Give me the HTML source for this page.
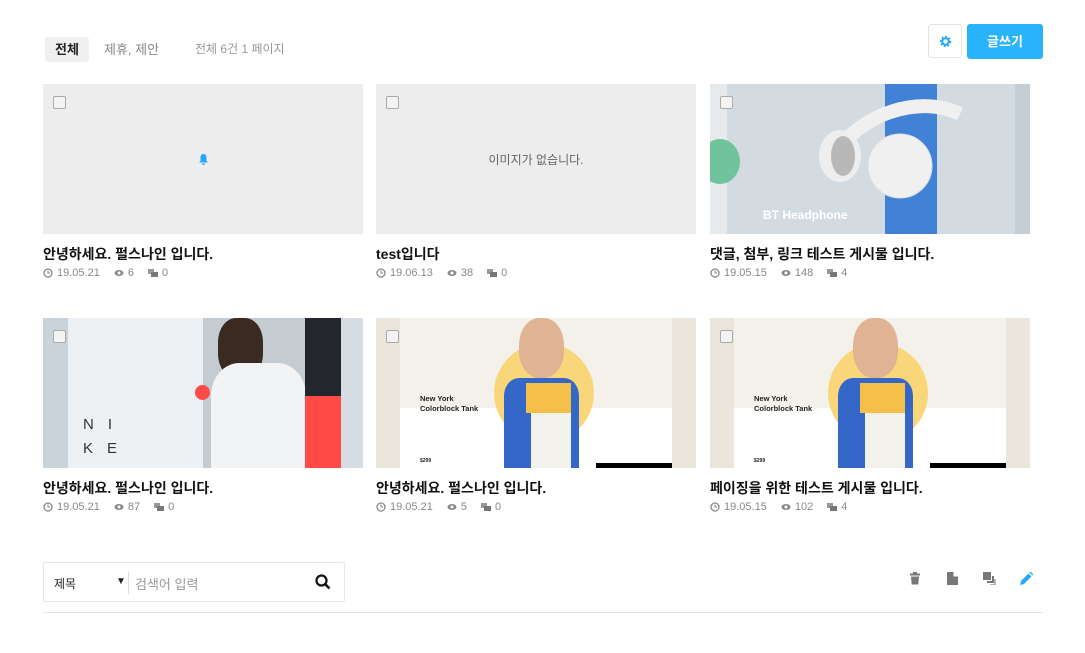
<!DOCTYPE html>
<html><head><meta charset="utf-8"><style>
*{margin:0;padding:0;box-sizing:border-box}
body{width:1085px;height:653px;background:#fff;font-family:"Liberation Sans","Noto Sans CJK KR",sans-serif;position:relative;overflow:hidden;color:#222}
.abs{position:absolute}
.tab{top:37px;height:25px;font-size:13px;line-height:25px}
.card{position:absolute;width:320px}
.img{height:150px;position:relative;overflow:hidden;background:#ededed}
.cb{position:absolute;left:10px;top:12px;width:13px;height:13px;border:1px solid #aaa;border-radius:2px;background:#f3f3f3}
.t{font-size:14px;font-weight:bold;margin-top:10px;height:20px;line-height:20px;color:#111}
.m{font-size:11px;color:#888;margin-top:3px;display:flex;align-items:center;gap:4px}
.m span{margin-right:10px}
.ic{display:inline-block;width:10px;height:10px}
</style></head><body>
<div class="abs tab" style="left:45px;width:44px;background:#f0f0f0;border-radius:3px;text-align:center;font-weight:bold">전체</div>
<div class="abs tab" style="left:104px;color:#888">제휴, 제안</div>
<div class="abs tab" style="left:195px;color:#999;font-size:12px">전체 6건 1 페이지</div>
<div class="abs" style="left:928px;top:24px;width:34px;height:34px;border:1px solid #e3e3e3;border-radius:3px;display:flex;align-items:center;justify-content:center">
<svg width="13" height="13" viewBox="0 0 16 16"><circle cx="8" cy="8" r="5.5" fill="none" stroke="#29a8f5" stroke-width="3" stroke-dasharray="2.2 2"/><circle cx="8" cy="8" r="4" fill="none" stroke="#29a8f5" stroke-width="2.5"/></svg></div>
<div class="abs" style="left:967px;top:24px;width:76px;height:35px;background:#29b3fb;border-radius:3px;color:#fff;font-weight:bold;font-size:13px;text-align:center;line-height:35px">글쓰기</div>

<!-- row 1 -->
<div class="card" style="left:43px;top:84px"><div class="img"><div class="cb"></div>
<svg class="abs" style="left:155px;top:69px" width="11" height="12" viewBox="0 0 11 12"><path d="M5.5 1C3 1 2.5 3 2.5 5v3L1 9.5h9L8.5 8V5C8.5 3 8 1 5.5 1z M4 10.5h3a1.5 1.5 0 0 1-3 0z" fill="#29a8f5"/></svg></div>
<div class="t">안녕하세요. 펄스나인 입니다.</div>
<div class="m"><svg class="ic" viewBox="0 0 10 10"><circle cx="5" cy="5" r="4" fill="none" stroke="#888" stroke-width="1.3"/><path d="M5 2.5V5h2" stroke="#888" fill="none"/></svg><span>19.05.21</span><svg class="ic" viewBox="0 0 10 10"><ellipse cx="5" cy="5" rx="4.5" ry="3" fill="#888"/><circle cx="5" cy="5" r="1.5" fill="#fff"/></svg><span>6</span><svg class="ic" viewBox="0 0 10 10"><rect x="0" y="1" width="6" height="5" fill="#999"/><rect x="3" y="4" width="7" height="5" fill="#777"/></svg><span>0</span></div></div>

<div class="card" style="left:376px;top:84px"><div class="img"><div class="cb"></div>
<div class="abs" style="left:0;right:0;top:67px;text-align:center;font-size:12px;color:#666">이미지가 없습니다.</div></div>
<div class="t">test입니다</div>
<div class="m"><svg class="ic" viewBox="0 0 10 10"><circle cx="5" cy="5" r="4" fill="none" stroke="#888" stroke-width="1.3"/><path d="M5 2.5V5h2" stroke="#888" fill="none"/></svg><span>19.06.13</span><svg class="ic" viewBox="0 0 10 10"><ellipse cx="5" cy="5" rx="4.5" ry="3" fill="#888"/><circle cx="5" cy="5" r="1.5" fill="#fff"/></svg><span>38</span><svg class="ic" viewBox="0 0 10 10"><rect x="0" y="1" width="6" height="5" fill="#999"/><rect x="3" y="4" width="7" height="5" fill="#777"/></svg><span>0</span></div></div>

<div class="card" style="left:710px;top:84px"><div class="img" style="background:#d3dbe0">
<div class="abs" style="left:0;top:0;width:17px;height:150px;background:#e6eaed"></div>
<div class="abs" style="left:305px;top:0;width:15px;height:150px;background:#c6ced5"></div>
<div class="abs" style="left:175px;top:0;width:52px;height:150px;background:#4282d6"></div>
<div class="abs" style="left:-10px;top:55px;width:40px;height:45px;border-radius:50%;background:#6fc39d"></div>
<svg class="abs" style="left:0;top:0" width="320" height="150"><path d="M125 70 C150 30 210 10 250 30" stroke="#f0f0f0" stroke-width="14" fill="none"/><ellipse cx="130" cy="72" rx="21" ry="26" fill="#eee"/><ellipse cx="133" cy="72" rx="12" ry="20" fill="#b8b8b8"/><circle cx="190" cy="82" r="32" fill="#f0f0f0"/><circle cx="190" cy="82" r="32" fill="none" stroke="#ddd"/></svg>
<div class="abs" style="left:53px;top:124px;color:#fff;font-weight:bold;font-size:12px">BT Headphone</div>
<div class="cb"></div></div>
<div class="t">댓글, 첨부, 링크 테스트 게시물 입니다.</div>
<div class="m"><svg class="ic" viewBox="0 0 10 10"><circle cx="5" cy="5" r="4" fill="none" stroke="#888" stroke-width="1.3"/><path d="M5 2.5V5h2" stroke="#888" fill="none"/></svg><span>19.05.15</span><svg class="ic" viewBox="0 0 10 10"><ellipse cx="5" cy="5" rx="4.5" ry="3" fill="#888"/><circle cx="5" cy="5" r="1.5" fill="#fff"/></svg><span>148</span><svg class="ic" viewBox="0 0 10 10"><rect x="0" y="1" width="6" height="5" fill="#999"/><rect x="3" y="4" width="7" height="5" fill="#777"/></svg><span>4</span></div></div>

<!-- row 2 -->
<div class="card" style="left:43px;top:318px"><div class="img" style="background:#dce4ea">
<div class="abs" style="left:0;top:0;width:25px;height:150px;background:#c9d3da"></div>
<div class="abs" style="left:25px;top:0;width:135px;height:150px;background:#eef1f4"></div>
<div class="abs" style="left:160px;top:0;width:102px;height:150px;background:#c4ccd2"></div>
<div class="abs" style="left:175px;top:0;width:45px;height:60px;border-radius:40%;background:#3b2a22"></div>
<div class="abs" style="left:168px;top:45px;width:95px;height:110px;border-radius:30% 30% 0 0;background:#f1f3f5"></div>
<div class="abs" style="left:262px;top:0;width:58px;height:150px;background:#d5dde3"></div>
<div class="abs" style="left:262px;top:0;width:36px;height:78px;background:#23262c"></div>
<div class="abs" style="left:262px;top:78px;width:36px;height:72px;background:#ff4a45"></div>
<div class="abs" style="left:152px;top:67px;width:15px;height:15px;border-radius:50%;background:#ff4a45"></div>
<div class="abs" style="left:40px;top:95px;font-size:15px;letter-spacing:14px;color:#333;line-height:24px">NI<br>KE</div>
<div class="cb"></div></div>
<div class="t">안녕하세요. 펄스나인 입니다.</div>
<div class="m"><svg class="ic" viewBox="0 0 10 10"><circle cx="5" cy="5" r="4" fill="none" stroke="#888" stroke-width="1.3"/><path d="M5 2.5V5h2" stroke="#888" fill="none"/></svg><span>19.05.21</span><svg class="ic" viewBox="0 0 10 10"><ellipse cx="5" cy="5" rx="4.5" ry="3" fill="#888"/><circle cx="5" cy="5" r="1.5" fill="#fff"/></svg><span>87</span><svg class="ic" viewBox="0 0 10 10"><rect x="0" y="1" width="6" height="5" fill="#999"/><rect x="3" y="4" width="7" height="5" fill="#777"/></svg><span>0</span></div></div>

<div class="card" style="left:376px;top:318px"><div class="img" style="background:#ebe6dc">
<div class="abs" style="left:24px;top:0;width:272px;height:90px;background:#f4f1ea"></div>
<div class="abs" style="left:24px;top:90px;width:272px;height:60px;background:#fff"></div>
<div class="abs" style="left:118px;top:25px;width:100px;height:100px;border-radius:50%;background:#f9d67a"></div>
<div class="abs" style="left:143px;top:0;width:45px;height:60px;border-radius:45%;background:#e0b394"></div>
<div class="abs" style="left:128px;top:60px;width:75px;height:90px;background:#3567c9;border-radius:20% 20% 0 0"></div>
<div class="abs" style="left:150px;top:65px;width:45px;height:30px;background:#f5c04a"></div>
<div class="abs" style="left:155px;top:95px;width:40px;height:55px;background:#f3f1ec"></div>
<div class="abs" style="left:44px;top:76px;font-size:7.5px;font-weight:bold;color:#222;line-height:10px">New York<br>Colorblock Tank</div>
<div class="abs" style="left:220px;top:145px;width:76px;height:5px;background:#000"></div>
<div class="abs" style="left:44px;top:140px;font-size:5px;font-weight:bold">$299</div>
<div class="cb"></div></div>
<div class="t">안녕하세요. 펄스나인 입니다.</div>
<div class="m"><svg class="ic" viewBox="0 0 10 10"><circle cx="5" cy="5" r="4" fill="none" stroke="#888" stroke-width="1.3"/><path d="M5 2.5V5h2" stroke="#888" fill="none"/></svg><span>19.05.21</span><svg class="ic" viewBox="0 0 10 10"><ellipse cx="5" cy="5" rx="4.5" ry="3" fill="#888"/><circle cx="5" cy="5" r="1.5" fill="#fff"/></svg><span>5</span><svg class="ic" viewBox="0 0 10 10"><rect x="0" y="1" width="6" height="5" fill="#999"/><rect x="3" y="4" width="7" height="5" fill="#777"/></svg><span>0</span></div></div>

<div class="card" style="left:710px;top:318px"><div class="img" style="background:#ebe6dc">
<div class="abs" style="left:24px;top:0;width:272px;height:90px;background:#f4f1ea"></div>
<div class="abs" style="left:24px;top:90px;width:272px;height:60px;background:#fff"></div>
<div class="abs" style="left:118px;top:25px;width:100px;height:100px;border-radius:50%;background:#f9d67a"></div>
<div class="abs" style="left:143px;top:0;width:45px;height:60px;border-radius:45%;background:#e0b394"></div>
<div class="abs" style="left:128px;top:60px;width:75px;height:90px;background:#3567c9;border-radius:20% 20% 0 0"></div>
<div class="abs" style="left:150px;top:65px;width:45px;height:30px;background:#f5c04a"></div>
<div class="abs" style="left:155px;top:95px;width:40px;height:55px;background:#f3f1ec"></div>
<div class="abs" style="left:44px;top:76px;font-size:7.5px;font-weight:bold;color:#222;line-height:10px">New York<br>Colorblock Tank</div>
<div class="abs" style="left:220px;top:145px;width:76px;height:5px;background:#000"></div>
<div class="abs" style="left:44px;top:140px;font-size:5px;font-weight:bold">$299</div>
<div class="cb"></div></div>
<div class="t">페이징을 위한 테스트 게시물 입니다.</div>
<div class="m"><svg class="ic" viewBox="0 0 10 10"><circle cx="5" cy="5" r="4" fill="none" stroke="#888" stroke-width="1.3"/><path d="M5 2.5V5h2" stroke="#888" fill="none"/></svg><span>19.05.15</span><svg class="ic" viewBox="0 0 10 10"><ellipse cx="5" cy="5" rx="4.5" ry="3" fill="#888"/><circle cx="5" cy="5" r="1.5" fill="#fff"/></svg><span>102</span><svg class="ic" viewBox="0 0 10 10"><rect x="0" y="1" width="6" height="5" fill="#999"/><rect x="3" y="4" width="7" height="5" fill="#777"/></svg><span>4</span></div></div>

<!-- search -->
<div class="abs" style="left:43px;top:562px;width:302px;height:40px;border:1px solid #e6e6e6;border-radius:2px">
<div class="abs" style="left:10px;top:12px;font-size:12px">제목</div>
<div class="abs" style="left:72px;top:13px;font-size:10px">▼</div>
<div class="abs" style="left:84px;top:9px;width:1px;height:22px;background:#ddd"></div>
<div class="abs" style="left:91px;top:11px;font-size:13px;color:#999">검색어 입력</div>
<svg class="abs" style="left:271px;top:11px" width="16" height="16" viewBox="0 0 16 16"><circle cx="6.5" cy="6.5" r="5" fill="none" stroke="#111" stroke-width="2.2"/><path d="M10 10l4.5 4.5" stroke="#111" stroke-width="2.6"/></svg>
</div>
<svg class="abs" style="left:909px;top:572px" width="12" height="13" viewBox="0 0 12 13"><rect x="1" y="1.5" width="10" height="2" fill="#777"/><rect x="4" y="0" width="4" height="2" fill="#777"/><path d="M2 4.5h8l-.7 8H2.7z" fill="#777"/></svg>
<svg class="abs" style="left:947px;top:572px" width="11" height="13" viewBox="0 0 11 13"><path d="M0 0h6.5l4.5 4.5V13H0z" fill="#777"/><path d="M6.5 0v4.5H11" fill="#fff"/></svg>
<svg class="abs" style="left:983px;top:572px" width="13" height="13" viewBox="0 0 13 13"><rect x="0" y="0" width="8" height="8" fill="#777"/><path d="M9 4h2v7H4V9h5z" fill="#777"/><path d="M12 7v6H7" stroke="#777" fill="none"/></svg>
<svg class="abs" style="left:1020px;top:572px" width="13" height="13" viewBox="0 0 13 13"><path d="M0 13l1-4 7.5-7.5 3 3L4 12z" fill="#29a8f5"/><path d="M9.5.5l1-1 3 3-1 1z" fill="#29a8f5"/></svg>
<div class="abs" style="left:43px;top:612px;width:1000px;height:1px;background:#e6e6e6"></div>
</body></html>
